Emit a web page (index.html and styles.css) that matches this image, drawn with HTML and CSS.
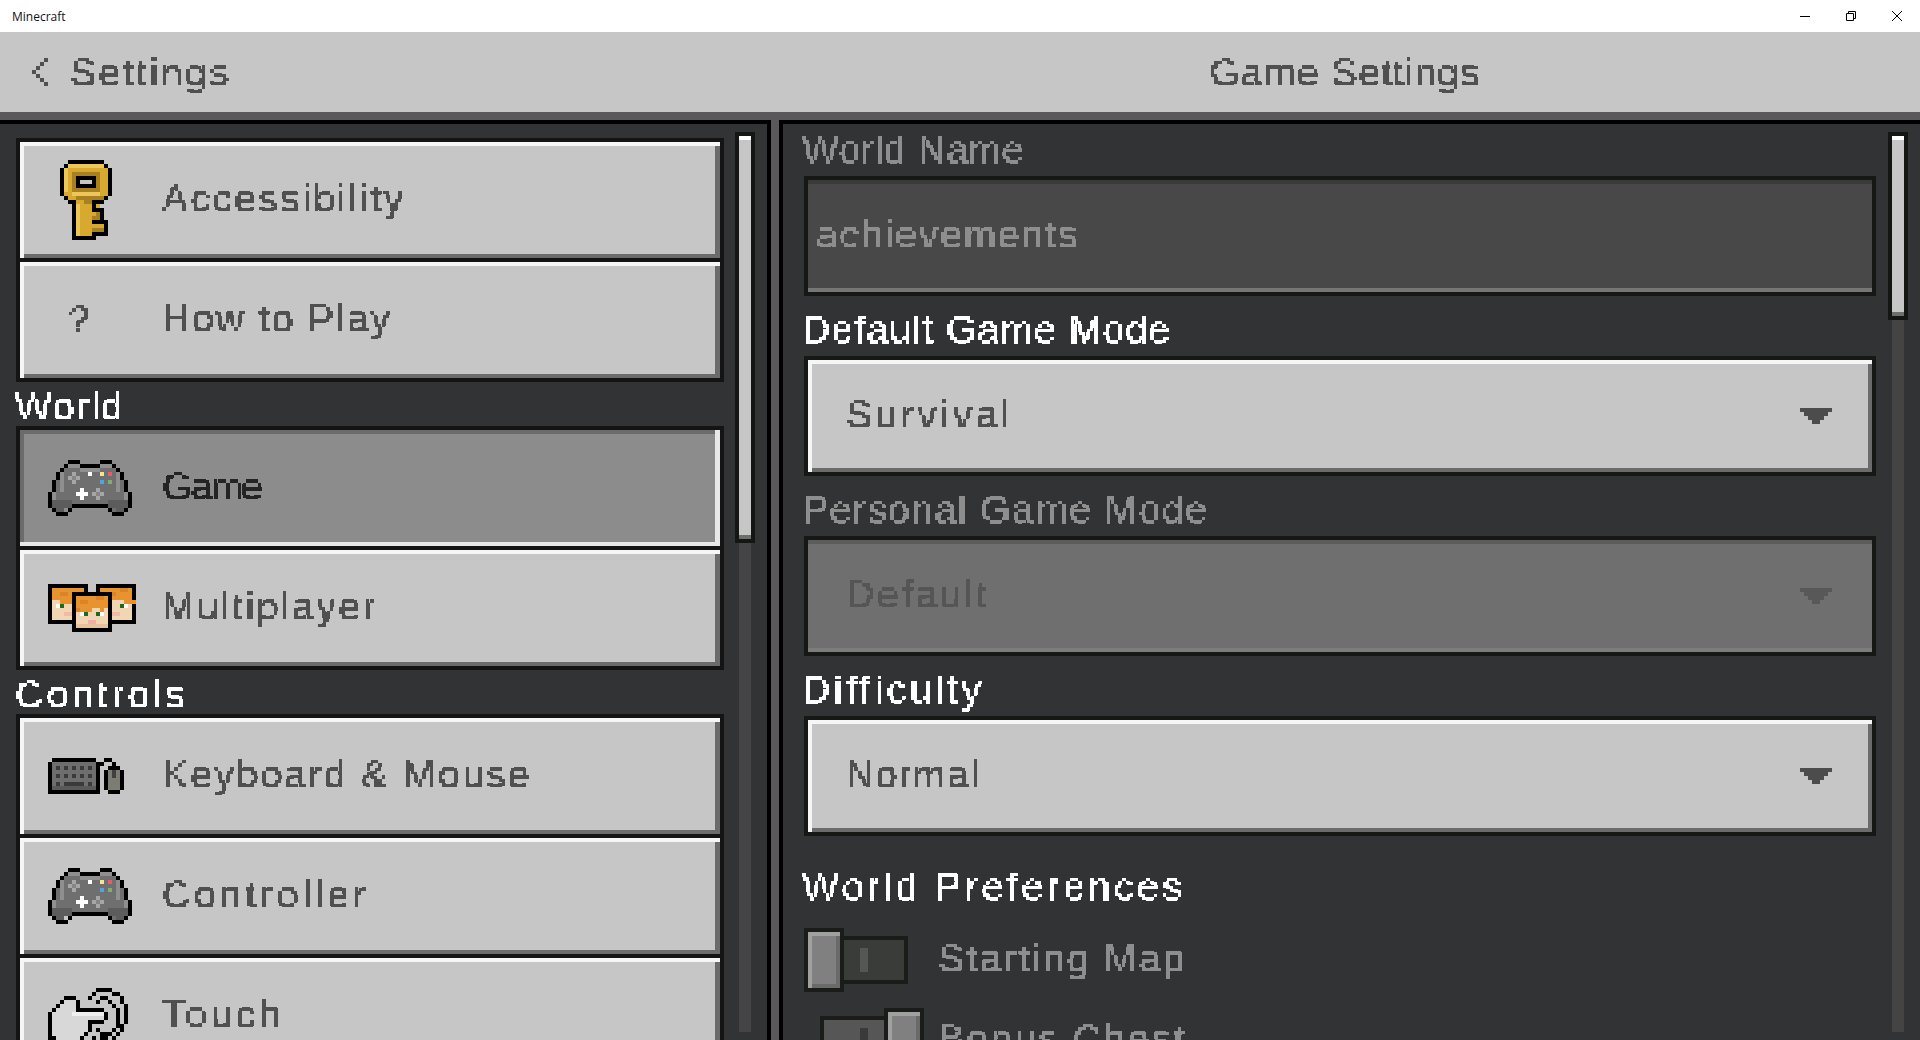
FILE: index.html
```html
<!DOCTYPE html>
<html lang="en">
  <head>
    <meta charset="UTF-8" />
    <title>Minecraft</title>
    <link rel="stylesheet" href="styles.css">
  </head>
  <body>
    <svg class="defs" width="0" height="0" aria-hidden="true">
      <!-- snaps text to the 4px block grid of the game font -->
      <filter id="blocky" x="0" y="0" width="1" height="1" primitiveUnits="userSpaceOnUse" color-interpolation-filters="sRGB">
        <feFlood x="1" y="1" width="2" height="2" flood-color="#000" result="dot" />
        <feComposite in="dot" in2="dot" x="0" y="0" width="4" height="4" result="cell" />
        <feTile in="cell" result="grid" />
        <feComposite in="SourceGraphic" in2="grid" operator="in" />
        <feComponentTransfer>
          <feFuncA type="discrete" tableValues="0 0 0 0 0 1 1 1 1 1" />
        </feComponentTransfer>
        <feMorphology operator="dilate" radius="1" />
      </filter>
      <symbol id="pad" viewBox="0 0 21 14" shape-rendering="crispEdges">
        <path fill="#6f6f6f" d="M5 1h3v1h5V1h3v1h1v1h1v2h1v3h1v4h-1v1h-3v-1h-2v-1H6v1H4v1H1v-1H0V8h1V5h1V3h1V2h2z" />
        <path fill="#8f8f8f" d="M5 1h3v1h5V1h3v1h-3v1H8V2H5zM3 3h1v5H3zM17 3h1v5h-1zM1 8h1v3H1zM19 8h1v3h-1z" />
        <path fill="#5c5c5c" d="M1 10h5v2H4v1H2v-1H1zM15 10h5v2h-1v1h-2v-1h-2z" />
        <path fill="#000" d="M5 0h3v1H5zM13 0h3v1h-3zM4 1h1v1H4zM8 1h5v1H8zM16 1h1v1h-1zM3 2h1v1H3zM17 2h1v1h-1zM2 3h1v2H2zM18 3h1v2h-1zM1 5h1v3H1zM19 5h1v3h-1zM0 8h1v4H0zM20 8h1v4h-1zM6 11h9v1H6zM1 12h1v1H1zM5 12h1v1H5zM15 12h1v1h-1zM19 12h1v1h-1zM2 13h3v1H2zM16 13h3v1h-3z" />
        <path fill="#a6a6a6" d="M6 3h1v1H6zM5 4h1v1H5zM7 4h1v1H7zM6 5h1v1H6zM12 7h1v1h-1zM11 8h1v1h-1zM13 8h1v1h-1zM12 9h1v1h-1z" />
        <path fill="#858585" d="M6 4h1v1H6zM12 8h1v1h-1z" />
        <path fill="#fff" d="M10 3h1v1h-1zM8 7h1v3H8zM7 8h3v1H7z" />
        <path fill="#f6e58d" d="M13 3h1v1h-1z" />
        <path fill="#ec5a72" d="M15 3h1v1h-1z" />
        <path fill="#4ea6e0" d="M13 5h1v1h-1z" />
        <path fill="#7fb069" d="M15 5h1v1h-1z" />
      </symbol>
    </svg>

    <div class="titlebar">
      <span class="app-name">Minecraft</span>
      <div class="window-btns">
        <svg class="win-icon" viewBox="0 0 10 10"><path d="M0 5.5h10" /></svg>
        <svg class="win-icon" viewBox="0 0 10 10"><path d="M.5 2.5h7v7h-7zM2.5 2.5v-2h7v7h-2" /></svg>
        <svg class="win-icon" viewBox="0 0 10 10"><path d="M0 0l10 10M10 0L0 10" /></svg>
      </div>
    </div>

    <header class="header">
      <div class="back">
        <svg class="chevron" viewBox="0 0 4 7" shape-rendering="crispEdges"><path fill="#505050" d="M3 0h1v1H3zM2 1h1v1H2zM1 2h1v1H1zM0 3h1v1H0zM1 4h1v1H1zM2 5h1v1H2zM3 6h1v1H3z" /></svg>
        <span class="txt sp-settings">Settings</span>
      </div>
      <div class="page-title"><span class="txt sp-title">Game Settings</span></div>
    </header>

    <main class="main">
      <section class="pane pane-left">
        <nav class="menu">
          <div class="group">
            <div class="item">
              <span class="item-icon">
                <svg class="ic-key" viewBox="0 0 13 20" shape-rendering="crispEdges">
                  <path fill="#d8a92f" d="M2 1h9v1h1v7h-1v1H8v1h2v2H8v2h3v3H8v1H4v-8H2V9H1V2h1z" />
                  <path fill="#edc65a" d="M2 1h9v1H2zM1 2h1v6H1zM4 11h1v8H4zM3 8h7v1H3z" />
                  <path fill="#a98020" d="M2 9h9v1H8v1H6v-1H4V9zM3 3h7v5H3zM8 13h2v2H8zM8 17h3v1H8z" />
                  <path fill="#000" d="M2 0h9v1H2zM1 1h1v1H1zM11 1h1v1h-1zM0 2h1v7H0zM12 2h1v7h-1zM1 9h1v1H1zM11 9h1v1h-1zM2 10h2v1H2zM8 10h3v1H8zM3 11h1v8H3zM8 11h1v1H8zM8 12h3v1H8zM10 13h1v2h-1zM8 15h4v1H8zM11 16h1v2h-1zM8 18h4v1H8zM3 19h6v1H3z" />
                  <path fill="#000" d="M4 4h5v3H4z" />
                  <path fill="#c6c6c6" d="M5 5h3v1H5z" />
                  <path fill="#d8a92f" d="M8 13h1v1H8zM8 16h2v1H8z" />
                </svg>
              </span>
              <span class="txt sp-access">Accessibility</span>
            </div>
            <div class="item">
              <span class="item-icon"><span class="txt glyph">?</span></span>
              <span class="txt sp-how">How to Play</span>
            </div>
          </div>

          <h2 class="section"><span class="txt sp-world">World</span></h2>
          <div class="group">
            <div class="item item-active">
              <span class="item-icon"><svg class="ic-pad"><use href="#pad" /></svg></span>
              <span class="txt sp-game">Game</span>
            </div>
            <div class="item">
              <span class="item-icon">
                <svg class="ic-faces" viewBox="0 0 22 12" shape-rendering="crispEdges">
                  <path fill="#000" d="M0 0h10v10H0zM12 0h10v10H12z" />
                  <path fill="#f2d6b3" d="M1 1h8v8H1zM13 1h8v8h-8z" />
                  <path fill="#e8932f" d="M1 1h8v3H7v1H3V4H1zM13 1h8v3h1v1h-3V4h-6z" />
                  <path fill="#d98426" d="M3 2h2v1H3zM15 2h2v1h-2zM18 1h2v1h-2z" />
                  <path fill="#fff" d="M2 5h1v1H2zM19 5h1v1h-1z" />
                  <path fill="#1d6b20" d="M3 5h1v1H3zM18 5h1v1h-1z" />
                  <path fill="#f0b9a8" d="M4 7h2v1H4zM16 7h2v1h-2z" />
                  <path fill="#000" d="M6 2h10v10H6z" />
                  <path fill="#f2d6b3" d="M7 3h8v8H7z" />
                  <path fill="#e8932f" d="M7 3h8v3h-1v1h-1V6h-2v1H9V7H7z" />
                  <path fill="#d98426" d="M8 4h2v1H8zM12 3h2v1h-2zM7 6h1v1H7z" />
                  <path fill="#e6c39a" d="M7 10h8v1H7z" />
                  <path fill="#fff" d="M8 7h1v1H8zM13 7h1v1h-1z" />
                  <path fill="#1d6b20" d="M9 7h1v1H9zM12 7h1v1h-1z" />
                  <path fill="#f0b0a8" d="M10 9h2v1h-2z" />
                </svg>
              </span>
              <span class="txt sp-multi">Multiplayer</span>
            </div>
          </div>

          <h2 class="section"><span class="txt sp-controls">Controls</span></h2>
          <div class="group">
            <div class="item">
              <span class="item-icon">
                <svg class="ic-keys" viewBox="0 0 19 9" shape-rendering="crispEdges">
                  <path fill="#000" d="M1 0h11v1h1v8H0V1h1zM13 1h1v1h-1zM14 0h2v1h-2zM16 1h1v1h-1zM15 2h3v1h-3zM14 3h1v5h-1zM18 3h1v5h-1zM15 8h3v1h-3z" />
                  <path fill="#6e6e6e" d="M1 1h11v7H1z" />
                  <path fill="#5a5a5a" d="M1 7h11v1H1z" />
                  <path fill="#3a3a3a" d="M2 2h1v1H2zM4 2h1v1H4zM6 2h1v1H6zM8 2h1v1H8zM10 2h1v1h-1zM2 4h1v1H2zM4 4h1v1H4zM6 4h1v1H6zM8 4h1v1H8zM10 4h1v1h-1zM2 6h1v1H2zM4 6h5v1H4zM10 6h1v1h-1z" />
                  <path fill="#7c7c72" d="M15 3h3v5h-3z" />
                  <path fill="#3f3f3f" d="M16 3h1v2h-1z" />
                </svg>
              </span>
              <span class="txt sp-keys">Keyboard &amp; Mouse</span>
            </div>
            <div class="item">
              <span class="item-icon"><svg class="ic-pad"><use href="#pad" /></svg></span>
              <span class="txt sp-ctrl">Controller</span>
            </div>
            <div class="item">
              <span class="item-icon">
                <svg class="ic-touch" viewBox="0 0 20 20" shape-rendering="crispEdges">
                  <path fill="#d8d8d8" d="M4 3h3v3h7v3h-4v3H9v1H8v7H1v-6H0V6h1V5h1V4h2z" />
                  <path fill="#efefef" d="M6 6h8v1H6z" />
                  <path fill="#000" d="M12 0h4v1h-4zM11 1h1v1h-1zM16 1h2v1h-2zM4 2h3v1H4zM10 2h1v1h-1zM13 2h2v1h-2zM18 2h1v1h-1zM3 3h1v1H3zM7 3h1v2H7zM12 3h1v1h-1zM15 3h1v1h-1zM18 3h1v1h-1zM2 4h1v1H2zM16 4h1v1h-1zM19 4h1v5h-1zM1 5h1v1H1zM7 5h7v1H7zM17 5h1v5h-1zM0 6h1v7H0zM14 6h1v2h-1zM10 8h4v1h-4zM10 9h1v2h-1zM18 9h1v2h-1zM12 10h1v1h-1zM16 10h1v1h-1zM9 11h1v1H9zM13 11h3v1h-3zM17 11h1v1h-1zM1 12h1v2H1zM8 12h1v2H8zM11 12h1v1h-1zM13 12h2v1h-2zM16 12h1v1h-1z" />
                </svg>
              </span>
              <span class="txt sp-touch">Touch</span>
            </div>
          </div>
        </nav>
        <div class="scrollbar">
          <div class="thumb thumb-left"></div>
          <div class="rail"></div>
        </div>
      </section>

      <div class="divider"></div>

      <section class="pane pane-right">
        <div class="form">
          <label class="label label-off"><span class="txt sp-wname">World Name</span></label>
          <div class="field field-text"><span class="txt sp-ach">achievements</span></div>

          <label class="label"><span class="txt sp-dgm">Default Game Mode</span></label>
          <div class="field field-select">
            <span class="txt sp-surv">Survival</span>
            <svg class="arrow" viewBox="0 0 8 4" shape-rendering="crispEdges"><path d="M0 0h8v1H7v1H6v1H5v1H3V3H2V2H1V1H0z" /></svg>
          </div>

          <label class="label label-off"><span class="txt sp-pgm">Personal Game Mode</span></label>
          <div class="field field-select field-off">
            <span class="txt sp-def">Default</span>
            <svg class="arrow" viewBox="0 0 8 4" shape-rendering="crispEdges"><path d="M0 0h8v1H7v1H6v1H5v1H3V3H2V2H1V1H0z" /></svg>
          </div>

          <label class="label"><span class="txt sp-diff">Difficulty</span></label>
          <div class="field field-select">
            <span class="txt sp-norm">Normal</span>
            <svg class="arrow" viewBox="0 0 8 4" shape-rendering="crispEdges"><path d="M0 0h8v1H7v1H6v1H5v1H3V3H2V2H1V1H0z" /></svg>
          </div>

          <h3 class="label prefs-title"><span class="txt sp-prefs">World Preferences</span></h3>

          <div class="toggle-row">
            <div class="toggle-slot">
              <div class="toggle">
                <div class="knob"></div>
                <div class="slide"><i class="tick"></i></div>
              </div>
            </div>
            <span class="txt toggle-text sp-map">Starting Map</span>
          </div>
          <div class="toggle-row">
            <div class="toggle-slot">
              <div class="toggle toggle-on">
                <div class="slide"><i class="tick"></i></div>
                <div class="knob"></div>
              </div>
            </div>
            <span class="txt toggle-text sp-chest">Bonus Chest</span>
          </div>
        </div>
        <div class="scrollbar">
          <div class="thumb thumb-right"></div>
          <div class="rail"></div>
        </div>
      </section>
    </main>
  </body>
</html>
```

FILE: styles.css
```css
html,
body {
  margin: 0;
  height: 1040px;
  overflow: hidden;
}
body {
  display: flex;
  flex-direction: column;
  font-family: "Liberation Sans", Arial, sans-serif;
  background: #313335;
}
.defs {
  position: absolute;
}

/* game text */
.txt {
  display: inline-block;
  font-size: 39px;
  line-height: 48px;
  height: 48px;
  margin-left: -1px;
  padding: 0 8px 0 0;
  white-space: nowrap;
  letter-spacing: 2.4px;
  filter: url(#blocky);
  color: #505050;
}

/* spacing per string, the game font has its own widths */
.sp-settings { letter-spacing: 2.6px; }
.sp-title { letter-spacing: 1px; }
.sp-how { letter-spacing: 2px; }
.sp-world { letter-spacing: 1.7px; }
.sp-game { letter-spacing: -1.8px; }
.sp-multi { letter-spacing: 2.5px; }
.sp-controls { letter-spacing: 3.5px; }
.sp-ctrl { letter-spacing: 3.9px; }
.sp-touch { letter-spacing: 3.6px; }
.sp-wname { letter-spacing: 0.6px; }
.sp-ach { letter-spacing: 1.9px; }
.sp-dgm { letter-spacing: 1.2px; }
.sp-surv { letter-spacing: 3.6px; }
.sp-pgm { letter-spacing: 1.5px; }
.sp-def { letter-spacing: 2.9px; }
.sp-diff { letter-spacing: 3.6px; }
.sp-norm { letter-spacing: 1.4px; }
.sp-prefs { letter-spacing: 3.6px; }
.sp-map { letter-spacing: 2.3px; }
.sp-chest { letter-spacing: 2.3px; }

/* window chrome */
.titlebar {
  height: 32px;
  background: #fff;
  display: flex;
  align-items: center;
  justify-content: space-between;
  flex: none;
}
.app-name {
  margin-left: 12px;
  font-family: "Open Sans", sans-serif;
  font-size: 12px;
  color: #111;
}
.window-btns {
  display: flex;
  gap: 36px;
  margin-right: 18px;
}
.win-icon {
  width: 10px;
  height: 10px;
  fill: none;
  stroke: #000;
  stroke-width: 1;
}

/* top bar */
.header {
  height: 80px;
  flex: none;
  background: #c6c6c6;
  border-bottom: 8px solid #5a585a;
  display: grid;
  grid-template-columns: 771px 1fr;
  align-items: center;
}
.header .txt {
  margin-top: 2px;
}
.back {
  display: flex;
  align-items: center;
  gap: 23px;
  padding-left: 32px;
}
.chevron {
  width: 16px;
  height: 28px;
}
.page-title {
  text-align: center;
  padding-left: 8px;
}

/* panes */
.main {
  flex: 1;
  display: flex;
  background: #5a585a;
  min-height: 0;
}
.pane {
  background: #313335;
  border-top: 4px solid #000;
  display: flex;
  min-height: 0;
  overflow: hidden;
}
.pane-left {
  border-right: 4px solid #000;
  padding-left: 16px;
  width: 751px;
}
.divider {
  width: 8px;
  flex: none;
}
.pane-right {
  flex: 1;
  border-left: 4px solid #000;
  padding-left: 21px;
}

/* left menu */
.menu {
  width: 708px;
  flex: none;
  padding-top: 14px;
}
.group {
  background: #141414;
  padding: 4px;
  display: flex;
  flex-direction: column;
  gap: 4px;
}
.section {
  margin: 0;
  height: 44px;
  padding-top: 1px;
  box-sizing: border-box;
  font-weight: normal;
}
.section .txt {
  color: #fff;
}
.item {
  height: 116px;
  flex: none;
  display: flex;
  align-items: center;
  background: #c6c6c6;
  box-shadow: inset 4px 4px 0 #f6f6f6, inset -5px -4px 0 #6b6b6b;
}
.item > .txt {
  margin-top: -2px;
}
.item-active {
  background: #8c8c8c;
  box-shadow: inset -5px -4px 0 #e8e8e8, inset 4px 4px 0 #6b6b6b;
}
.item-active .txt {
  color: #242424;
}
.item-icon {
  width: 143px;
  flex: none;
  box-sizing: border-box;
  padding-left: 28px;
  display: flex;
  align-items: center;
}
.ic-key {
  width: 52px;
  height: 80px;
  margin-left: 12px;
}
.ic-pad {
  width: 84px;
  height: 56px;
}
.ic-faces {
  width: 88px;
  height: 48px;
}
.ic-keys {
  width: 76px;
  height: 36px;
}
.ic-touch {
  width: 80px;
  height: 80px;
  margin-top: 24px;
}
.glyph {
  margin-left: 20px;
}

/* scrollbars */
.scrollbar {
  width: 20px;
  height: 900px;
  margin: 8px 0 0 11px;
  flex: none;
  display: flex;
  flex-direction: column;
  align-items: center;
}
.pane-right .scrollbar {
  margin-left: 12px;
}
.thumb {
  width: 20px;
  box-sizing: border-box;
  flex: none;
  border: 4px solid #141614;
  background: #c6c6c6;
  box-shadow: inset 0 4px 0 #fff, inset 0 -4px 0 #6e6e6e;
}
.thumb-left {
  height: 411px;
}
.thumb-right {
  height: 188px;
}
.rail {
  flex: 1;
  width: 12px;
  background: #444;
}

/* right form */
.form {
  width: 1072px;
  flex: none;
  padding-top: 8px;
}
.label {
  display: block;
  margin: 0;
  height: 44px;
  font-weight: normal;
}
.label .txt {
  color: #fff;
  line-height: 36px;
  height: 40px;
  margin-left: -2px;
}
.label-off .txt {
  color: #8e8e8e;
}
.field {
  height: 120px;
  box-sizing: border-box;
  border: 4px solid #161816;
  margin-bottom: 16px;
  display: flex;
  align-items: center;
}
.field .txt {
  margin-top: -2px;
  margin-left: 0;
}
.field-text {
  background: #484848;
  box-shadow: inset 0 4px 0 #3a3a3a, inset 0 -4px 0 #767676;
  padding-left: 8px;
}
.field-text .txt {
  color: #8e8e8e;
}
.field-select {
  background: #c6c6c6;
  box-shadow: inset 4px 4px 0 #f6f6f6, inset -4px -4px 0 #6b6b6b;
  padding-left: 38px;
  justify-content: space-between;
}
.field-off {
  background: #6f6f6f;
  box-shadow: inset 0 4px 0 #5c5c5c, inset 0 -4px 0 #7c7c7c;
}
.field-off .txt {
  color: #555;
}
.arrow {
  width: 32px;
  height: 16px;
  margin-right: 40px;
  fill: #4c4c4c;
}
.field-off .arrow {
  fill: #585858;
}
.prefs-title {
  margin-top: 33px;
  margin-bottom: 15px;
}

/* toggles */
.toggle-row {
  display: flex;
  align-items: center;
  height: 64px;
  margin-bottom: 16px;
}
.toggle-slot {
  width: 136px;
  flex: none;
}
.toggle {
  width: 104px;
  display: flex;
  align-items: center;
}
.toggle-on {
  margin-left: 16px;
}
.knob {
  width: 40px;
  height: 64px;
  box-sizing: border-box;
  flex: none;
  border: 4px solid #1a1c1a;
  background: #808080;
  box-shadow: inset 4px 4px 0 #a0a0a0, inset -4px -4px 0 #6a6a6a;
}
.slide {
  width: 64px;
  height: 48px;
  box-sizing: border-box;
  flex: none;
  border: 4px solid #1a1c1a;
  border-left: 0;
  background: #3a3c3a;
  padding-top: 8px;
  padding-left: 16px;
}
.toggle-on .slide {
  border-left: 4px solid #1a1c1a;
  border-right: 0;
  background: #565656;
  padding-left: 36px;
}
.tick {
  display: block;
  width: 8px;
  height: 24px;
  background: #565656;
}
.toggle-on .tick {
  background: #3a3a3a;
}
.toggle-text {
  color: #8e8e8e;
  margin-top: -2px;
  margin-left: -2px;
}
```
